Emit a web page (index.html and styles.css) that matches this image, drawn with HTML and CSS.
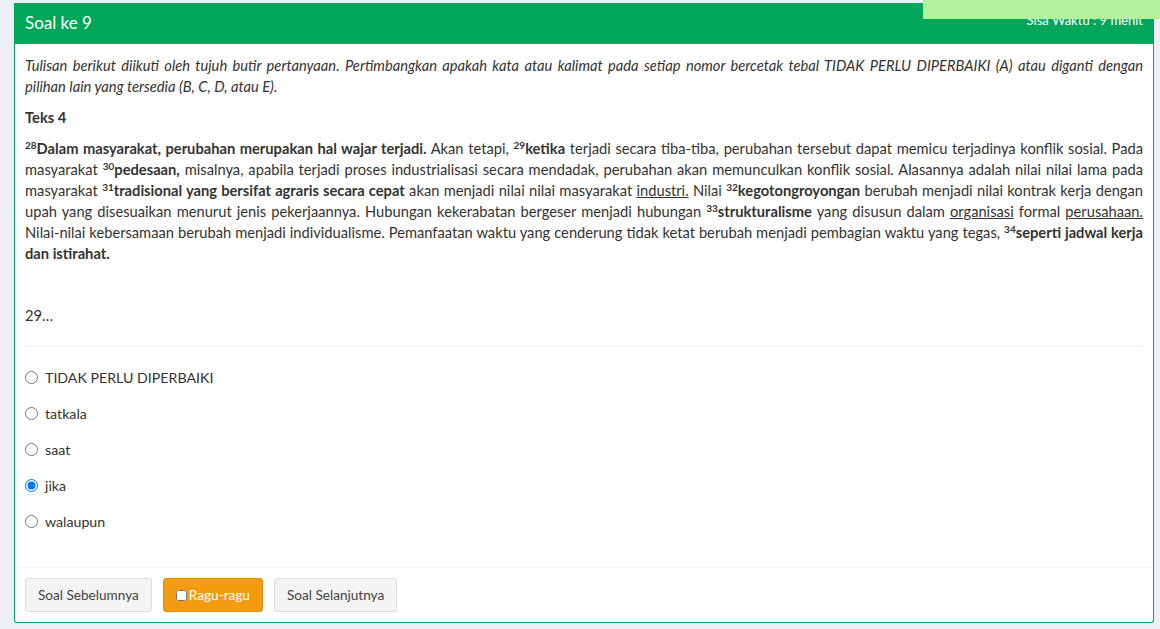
FILE: index.html
```html
<!DOCTYPE html>
<html lang="id">
<head>
<meta charset="utf-8">
<title>Soal ke 9</title>
<link rel="stylesheet" href="styles.css">
</head>
<body>
<div class="timer-cover"></div>
<div class="box">
  <div class="box-header">
    <h3 class="box-title">Soal ke 9</h3>
    <span class="timer">Sisa Waktu : 9 menit</span>
  </div>
  <div class="box-body">
    <p class="intro"><em>Tulisan berikut diikuti oleh tujuh butir pertanyaan. Pertimbangkan apakah kata atau kalimat pada setiap nomor bercetak tebal TIDAK PERLU DIPERBAIKI (A) atau diganti dengan pilihan lain yang tersedia (B, C, D, atau E).</em></p>
    <p><strong>Teks 4</strong></p>
    <p class="passage"><sup>28</sup><strong>Dalam masyarakat, perubahan merupakan hal wajar terjadi.</strong> Akan tetapi, <sup>29</sup><strong>ketika</strong> terjadi secara tiba-tiba, perubahan tersebut dapat memicu terjadinya konflik sosial. Pada masyarakat <sup>30</sup><strong>pedesaan,</strong> misalnya, apabila terjadi proses industrialisasi secara mendadak, perubahan akan memunculkan konflik sosial. Alasannya adalah nilai nilai lama pada masyarakat <sup>31</sup><strong>tradisional yang bersifat agraris secara cepat</strong> akan menjadi nilai nilai masyarakat <u>industri.</u> Nilai <sup>32</sup><strong>kegotongroyongan</strong> berubah menjadi nilai kontrak kerja dengan upah yang disesuaikan menurut jenis pekerjaannya. Hubungan kekerabatan bergeser menjadi hubungan <sup>33</sup><strong>strukturalisme</strong> yang disusun dalam <u>organisasi</u> formal <u>perusahaan.</u> Nilai-nilai kebersamaan berubah menjadi individualisme. Pemanfaatan waktu yang cenderung tidak ketat berubah menjadi pembagian waktu yang tegas, <sup>34</sup><strong>seperti jadwal kerja dan istirahat.</strong></p>
    <p class="empty"><br></p>
    <p class="question">29…</p>
    <hr>
    <div class="options">
      <label class="option"><input type="radio" name="jawab" value="A"> TIDAK PERLU DIPERBAIKI</label>
      <label class="option"><input type="radio" name="jawab" value="B"> tatkala</label>
      <label class="option"><input type="radio" name="jawab" value="C"> saat</label>
      <label class="option"><input type="radio" name="jawab" value="D" checked> jika</label>
      <label class="option"><input type="radio" name="jawab" value="E"> walaupun</label>
    </div>
  </div>
  <div class="box-footer">
    <button class="btn">Soal Sebelumnya</button>
    <button class="btn btn-warning"><input type="checkbox" class="ragu-check"> Ragu-ragu</button>
    <button class="btn">Soal Selanjutnya</button>
  </div>
</div>
</body>
</html>
```
FILE: styles.css
```css
* { box-sizing: border-box; }
html, body { margin: 0; padding: 0; }
body {
  background: #ecf0f5;
  font-family: "Lato", "Liberation Sans", sans-serif;
  font-size: 14.7px;
  line-height: 21px;
  color: #333;
  padding: 3px 6px 0 14px;
}
.timer-cover {
  position: fixed;
  top: 0;
  right: 0;
  width: 237px;
  height: 19px;
  background: #b2f29a;
  z-index: 10;
}
.box {
  border: 1px solid #00a65a;
  border-top: 0;
  background: #fff;
  border-radius: 0 0 3px 3px;
  width: 1140px;
}
.box-header {
  background: #00a65a;
  color: #fff;
  height: 41px;
  margin: 0 -1px;
  padding: 0 11px 0 11px;
  display: flex;
  justify-content: space-between;
  align-items: flex-start;
}
.box-title {
  margin: 0;
  font-size: 17px;
  font-weight: 400;
  line-height: 20px;
  padding-top: 10px;
}
.timer {
  font-size: 13px;
  line-height: 20px;
  padding-top: 7px;
}
.box-body {
  padding: 11px 10px 36px 10px;
}
p { margin: 0 0 10px; }
.passage { text-align: justify; }
.intro { text-align: justify; }
sup {
  font-size: 10px;
  font-weight: 700;
  line-height: 0;
  vertical-align: 5px;
}
hr {
  border: 0;
  border-top: 1px solid #eee;
  margin: 20px 0;
}
.options {
  display: flex;
  flex-direction: column;
  gap: 16px;
}
.option {
  display: flex;
  align-items: center;
  gap: 7px;
  height: 20px;
  font-size: 14.2px;
}
.option input {
  margin: 0;
  width: 13px;
  height: 13px;
}
.box-footer {
  border-top: 1px solid #f4f4f4;
  padding: 10px;
  display: flex;
  gap: 11px;
}
.btn {
  font-family: inherit;
  font-size: 13.6px;
  line-height: 20px;
  padding: 6px 12px;
  border: 1px solid #ddd;
  border-radius: 3px;
  background: #f4f4f4;
  color: #444;
}
.btn-warning {
  background: #f39c12;
  border-color: #e08e0b;
  color: #fff;
  display: flex;
  align-items: center;
  gap: 2px;
}
.ragu-check {
  margin: 0;
  width: 11px;
  height: 11px;
}
```
